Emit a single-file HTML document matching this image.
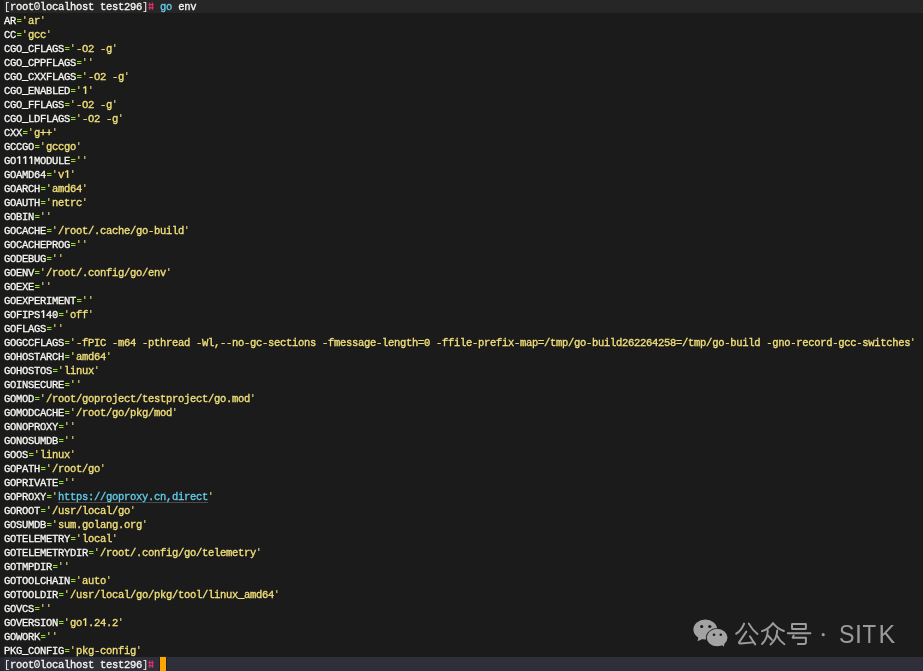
<!DOCTYPE html>
<html><head><meta charset="utf-8"><style>
html,body{margin:0;padding:0}
body{width:923px;height:671px;overflow:hidden;background:#1b1b1b;position:relative;font-family:"Liberation Mono",monospace;}
.band1{position:absolute;left:4px;top:0;width:919px;height:13px;background:#262626}
.band2{position:absolute;left:0;top:657px;width:923px;height:14px;background:#26262e}
.band2 i{position:absolute;left:4px;top:0;right:0;bottom:0;background:#2f2f3a}
.txt{position:absolute;left:4px;top:0px;font-size:10.5px;letter-spacing:-0.3px;line-height:14px;-webkit-font-smoothing:antialiased;-webkit-text-stroke:0.3px currentColor;transform:translateZ(0);}
.l{height:14px;white-space:pre}
.w{color:#f6f6f2}
.g{color:#98e02a}
.y{color:#f2e07a}
.h{color:#f5307c}
.c{color:#62cdea}
.u{color:#62cdea;text-decoration:underline;text-decoration-color:#4a4a4a;text-underline-offset:2px}
.cur{position:absolute;left:160px;top:657px;width:6px;height:14px;background:#ffa500;box-shadow:0 0 0 1px #202230}
.wm{position:absolute;left:0;top:0}
.gl{display:inline-block;vertical-align:top}
.br{-webkit-text-stroke:0}
.e,.q{display:inline-block;width:6px;height:14px;vertical-align:top;-webkit-text-stroke:0}
.e{background:linear-gradient(#98e02a,#98e02a) 1px 5px/4px 1px no-repeat,linear-gradient(#98e02a,#98e02a) 1px 7px/4px 1px no-repeat,linear-gradient(rgba(152,224,42,0.45),rgba(152,224,42,0.45)) 5px 5px/1px 1px no-repeat,linear-gradient(rgba(152,224,42,0.45),rgba(152,224,42,0.45)) 5px 7px/1px 1px no-repeat}
.q{background:linear-gradient(rgba(242,224,122,0.72),rgba(242,224,122,0.72)) 2px 2px/1px 3px no-repeat,linear-gradient(rgba(242,224,122,0.35),rgba(242,224,122,0.35)) 3px 2px/1px 3px no-repeat}
</style></head><body>
<div class="band1"></div>
<div class="band2"><i></i></div>
<div class="cur"></div>
<div class="txt">
<div class="l p"><span class="w"><span class="br">[</span>root<svg class="gl" width="6" height="14" viewBox="0 0 6 14"><ellipse cx="3" cy="6.1" rx="2.35" ry="3.45" stroke="currentColor" stroke-width="1.1" fill="none"/><ellipse cx="3" cy="6.3" rx="1.2" ry="1.6" fill="currentColor" fill-opacity="0.55"/></svg>localhost test296<span class="br">]</span></span><span class="h"><svg class="gl" width="6" height="14" viewBox="0 0 6 14"><path d="M1.8,2.6 V9.9 M4.3,2.6 V9.9 M0.3,4.7 H5.8 M0.3,7.8 H5.8" stroke="currentColor" stroke-width="0.95" fill="none"/></svg></span> <span class="c">go</span> <span class="w">env</span></div>
<div class="l"><span class="w">AR</span><span class="e"></span><span class="q"></span><span class="y">ar</span><span class="q"></span></div>
<div class="l"><span class="w">CC</span><span class="e"></span><span class="q"></span><span class="y">gcc</span><span class="q"></span></div>
<div class="l"><span class="w">CGO_CFLAGS</span><span class="e"></span><span class="q"></span><span class="y">-O2 -g</span><span class="q"></span></div>
<div class="l"><span class="w">CGO_CPPFLAGS</span><span class="e"></span><span class="q"></span><span class="y"></span><span class="q"></span></div>
<div class="l"><span class="w">CGO_CXXFLAGS</span><span class="e"></span><span class="q"></span><span class="y">-O2 -g</span><span class="q"></span></div>
<div class="l"><span class="w">CGO_ENABLED</span><span class="e"></span><span class="q"></span><span class="y"><svg class="gl" width="6" height="14" viewBox="0 0 6 14"><path d="M3.6,2.4 V10" stroke="currentColor" stroke-width="1.5" fill="none"/><path d="M3.6,2.6 L1.2,4.3" stroke="currentColor" stroke-width="1.2" fill="none"/></svg></span><span class="q"></span></div>
<div class="l"><span class="w">CGO_FFLAGS</span><span class="e"></span><span class="q"></span><span class="y">-O2 -g</span><span class="q"></span></div>
<div class="l"><span class="w">CGO_LDFLAGS</span><span class="e"></span><span class="q"></span><span class="y">-O2 -g</span><span class="q"></span></div>
<div class="l"><span class="w">CXX</span><span class="e"></span><span class="q"></span><span class="y">g++</span><span class="q"></span></div>
<div class="l"><span class="w">GCCGO</span><span class="e"></span><span class="q"></span><span class="y">gccgo</span><span class="q"></span></div>
<div class="l"><span class="w">GO<svg class="gl" width="6" height="14" viewBox="0 0 6 14"><path d="M3.6,2.4 V10" stroke="currentColor" stroke-width="1.5" fill="none"/><path d="M3.6,2.6 L1.2,4.3" stroke="currentColor" stroke-width="1.2" fill="none"/></svg><svg class="gl" width="6" height="14" viewBox="0 0 6 14"><path d="M3.6,2.4 V10" stroke="currentColor" stroke-width="1.5" fill="none"/><path d="M3.6,2.6 L1.2,4.3" stroke="currentColor" stroke-width="1.2" fill="none"/></svg><svg class="gl" width="6" height="14" viewBox="0 0 6 14"><path d="M3.6,2.4 V10" stroke="currentColor" stroke-width="1.5" fill="none"/><path d="M3.6,2.6 L1.2,4.3" stroke="currentColor" stroke-width="1.2" fill="none"/></svg>MODULE</span><span class="e"></span><span class="q"></span><span class="y"></span><span class="q"></span></div>
<div class="l"><span class="w">GOAMD64</span><span class="e"></span><span class="q"></span><span class="y">v<svg class="gl" width="6" height="14" viewBox="0 0 6 14"><path d="M3.6,2.4 V10" stroke="currentColor" stroke-width="1.5" fill="none"/><path d="M3.6,2.6 L1.2,4.3" stroke="currentColor" stroke-width="1.2" fill="none"/></svg></span><span class="q"></span></div>
<div class="l"><span class="w">GOARCH</span><span class="e"></span><span class="q"></span><span class="y">amd64</span><span class="q"></span></div>
<div class="l"><span class="w">GOAUTH</span><span class="e"></span><span class="q"></span><span class="y">netrc</span><span class="q"></span></div>
<div class="l"><span class="w">GOBIN</span><span class="e"></span><span class="q"></span><span class="y"></span><span class="q"></span></div>
<div class="l"><span class="w">GOCACHE</span><span class="e"></span><span class="q"></span><span class="y">/root/.cache/go-build</span><span class="q"></span></div>
<div class="l"><span class="w">GOCACHEPROG</span><span class="e"></span><span class="q"></span><span class="y"></span><span class="q"></span></div>
<div class="l"><span class="w">GODEBUG</span><span class="e"></span><span class="q"></span><span class="y"></span><span class="q"></span></div>
<div class="l"><span class="w">GOENV</span><span class="e"></span><span class="q"></span><span class="y">/root/.config/go/env</span><span class="q"></span></div>
<div class="l"><span class="w">GOEXE</span><span class="e"></span><span class="q"></span><span class="y"></span><span class="q"></span></div>
<div class="l"><span class="w">GOEXPERIMENT</span><span class="e"></span><span class="q"></span><span class="y"></span><span class="q"></span></div>
<div class="l"><span class="w">GOFIPS<svg class="gl" width="6" height="14" viewBox="0 0 6 14"><path d="M3.6,2.4 V10" stroke="currentColor" stroke-width="1.5" fill="none"/><path d="M3.6,2.6 L1.2,4.3" stroke="currentColor" stroke-width="1.2" fill="none"/></svg>40</span><span class="e"></span><span class="q"></span><span class="y">off</span><span class="q"></span></div>
<div class="l"><span class="w">GOFLAGS</span><span class="e"></span><span class="q"></span><span class="y"></span><span class="q"></span></div>
<div class="l"><span class="w">GOGCCFLAGS</span><span class="e"></span><span class="q"></span><span class="y">-fPIC -m64 -pthread -Wl,--no-gc-sections -fmessage-length=0 -ffile-prefix-map=/tmp/go-build262264258=/tmp/go-build -gno-record-gcc-switches</span><span class="q"></span></div>
<div class="l"><span class="w">GOHOSTARCH</span><span class="e"></span><span class="q"></span><span class="y">amd64</span><span class="q"></span></div>
<div class="l"><span class="w">GOHOSTOS</span><span class="e"></span><span class="q"></span><span class="y">linux</span><span class="q"></span></div>
<div class="l"><span class="w">GOINSECURE</span><span class="e"></span><span class="q"></span><span class="y"></span><span class="q"></span></div>
<div class="l"><span class="w">GOMOD</span><span class="e"></span><span class="q"></span><span class="y">/root/goproject/testproject/go.mod</span><span class="q"></span></div>
<div class="l"><span class="w">GOMODCACHE</span><span class="e"></span><span class="q"></span><span class="y">/root/go/pkg/mod</span><span class="q"></span></div>
<div class="l"><span class="w">GONOPROXY</span><span class="e"></span><span class="q"></span><span class="y"></span><span class="q"></span></div>
<div class="l"><span class="w">GONOSUMDB</span><span class="e"></span><span class="q"></span><span class="y"></span><span class="q"></span></div>
<div class="l"><span class="w">GOOS</span><span class="e"></span><span class="q"></span><span class="y">linux</span><span class="q"></span></div>
<div class="l"><span class="w">GOPATH</span><span class="e"></span><span class="q"></span><span class="y">/root/go</span><span class="q"></span></div>
<div class="l"><span class="w">GOPRIVATE</span><span class="e"></span><span class="q"></span><span class="y"></span><span class="q"></span></div>
<div class="l"><span class="w">GOPROXY</span><span class="e"></span><span class="q"></span><span class="u">https://goproxy.cn,direct</span><span class="q"></span></div>
<div class="l"><span class="w">GOROOT</span><span class="e"></span><span class="q"></span><span class="y">/usr/local/go</span><span class="q"></span></div>
<div class="l"><span class="w">GOSUMDB</span><span class="e"></span><span class="q"></span><span class="y">sum.golang.org</span><span class="q"></span></div>
<div class="l"><span class="w">GOTELEMETRY</span><span class="e"></span><span class="q"></span><span class="y">local</span><span class="q"></span></div>
<div class="l"><span class="w">GOTELEMETRYDIR</span><span class="e"></span><span class="q"></span><span class="y">/root/.config/go/telemetry</span><span class="q"></span></div>
<div class="l"><span class="w">GOTMPDIR</span><span class="e"></span><span class="q"></span><span class="y"></span><span class="q"></span></div>
<div class="l"><span class="w">GOTOOLCHAIN</span><span class="e"></span><span class="q"></span><span class="y">auto</span><span class="q"></span></div>
<div class="l"><span class="w">GOTOOLDIR</span><span class="e"></span><span class="q"></span><span class="y">/usr/local/go/pkg/tool/linux_amd64</span><span class="q"></span></div>
<div class="l"><span class="w">GOVCS</span><span class="e"></span><span class="q"></span><span class="y"></span><span class="q"></span></div>
<div class="l"><span class="w">GOVERSION</span><span class="e"></span><span class="q"></span><span class="y">go<svg class="gl" width="6" height="14" viewBox="0 0 6 14"><path d="M3.6,2.4 V10" stroke="currentColor" stroke-width="1.5" fill="none"/><path d="M3.6,2.6 L1.2,4.3" stroke="currentColor" stroke-width="1.2" fill="none"/></svg>.24.2</span><span class="q"></span></div>
<div class="l"><span class="w">GOWORK</span><span class="e"></span><span class="q"></span><span class="y"></span><span class="q"></span></div>
<div class="l"><span class="w">PKG_CONFIG</span><span class="e"></span><span class="q"></span><span class="y">pkg-config</span><span class="q"></span></div>
<div class="l p2"><span class="w"><span class="br">[</span>root<svg class="gl" width="6" height="14" viewBox="0 0 6 14"><ellipse cx="3" cy="6.1" rx="2.35" ry="3.45" stroke="currentColor" stroke-width="1.1" fill="none"/><ellipse cx="3" cy="6.3" rx="1.2" ry="1.6" fill="currentColor" fill-opacity="0.55"/></svg>localhost test296<span class="br">]</span></span><span class="h"><svg class="gl" width="6" height="14" viewBox="0 0 6 14"><path d="M1.8,2.6 V9.9 M4.3,2.6 V9.9 M0.3,4.7 H5.8 M0.3,7.8 H5.8" stroke="currentColor" stroke-width="0.95" fill="none"/></svg></span></div>
</div>
<svg class="wm" width="923" height="671" viewBox="0 0 923 671">
<g fill="#a3a3a3">
<ellipse cx="705.3" cy="629.5" rx="11.9" ry="10"/>
<path d="M698.5,636 L697.6,641.2 L703.5,638.5 Z"/>
</g>
<ellipse cx="717.1" cy="637.6" rx="11.2" ry="9.5" fill="#1b1b1b"/>
<g fill="#a3a3a3">
<ellipse cx="717.1" cy="637.6" rx="10.4" ry="8.75"/>
<path d="M720.5,644 L724,646.8 L724.5,642 Z"/>
</g>
<g fill="#1b1b1b">
<circle cx="701.7" cy="626.5" r="1.6"/><circle cx="709.8" cy="626.5" r="1.6"/>
<circle cx="714" cy="634.8" r="1.3"/><circle cx="720.8" cy="634.8" r="1.3"/>
</g>
<g fill="none" stroke="#9c9c9c" stroke-width="1.95" stroke-linecap="round" stroke-linejoin="round">
<path d="M744.1,623.6 Q741.5,630.5 736.2,633.7"/>
<path d="M748.8,623.6 Q752,629.5 757.5,633.9"/>
<path d="M746.3,631.6 L738.9,642.6 Q739.2,643.6 741,643.5 L753,642.4"/>
<path d="M749.9,636.3 L755.2,644.4"/>
<path d="M762,631.2 Q769.5,628.5 773,623.1 Q777,628.5 783.9,631"/>
<path d="M767.8,630.5 Q767.5,639 762,643.9"/>
<path d="M768.4,636 L771.9,639.9"/>
<path d="M777.2,630.5 Q777,639 770.5,644.4"/>
<path d="M777.2,635.9 Q779.5,641 784.4,644.2"/>
<rect x="792" y="624" width="13.9" height="5" rx="0.4"/>
<path d="M787.8,633.2 H810.4"/>
<path d="M793.6,635.6 L792.6,637.7 H805.9 V642.4 Q805.9,643.9 804.2,643.9 H797.9"/>
</g>
<circle cx="823.2" cy="634.7" r="1.6" fill="#9a9a9a"/>
<g font-family="Liberation Sans" font-size="25" fill="#9a9a9a">
<text transform="translate(839,643) scale(0.93,1)" x="0" y="0">S</text>
<text transform="translate(855,643)" x="0" y="0">I</text>
<text transform="translate(862.5,643) scale(0.89,1)" x="0" y="0">T</text>
<text transform="translate(878.5,643)" x="0" y="0">K</text>
</g>
</svg>

</body></html>
